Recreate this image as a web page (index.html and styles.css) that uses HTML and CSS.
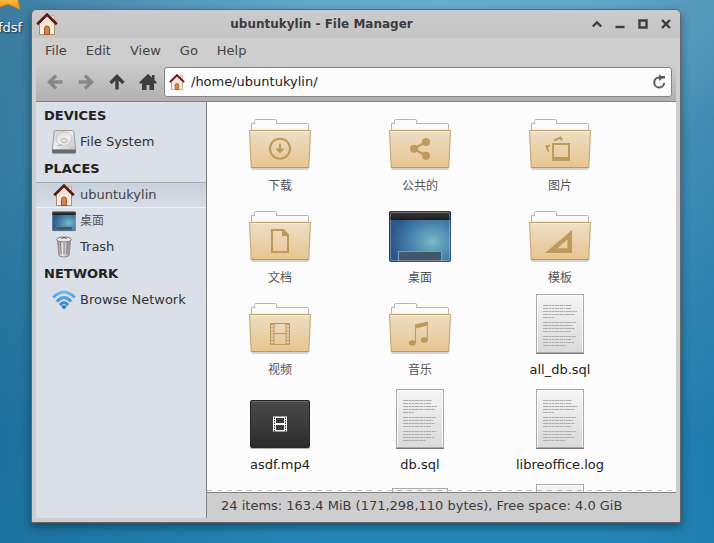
FILE: index.html
```html
<!DOCTYPE html>
<html lang="en">
<head>
<meta charset="utf-8">
<title>ubuntukylin - File Manager</title>
<link rel="stylesheet" href="styles.css">
</head>
<body>
<svg class="defs" aria-hidden="true">
  <defs>
    <linearGradient id="g-folder" x1="0" y1="0" x2="0" y2="1"><stop offset="0" stop-color="#eddfc6"/><stop offset="1" stop-color="#e7c48f"/></linearGradient>
    <linearGradient id="g-doc" x1="0" y1="0" x2="0" y2="1"><stop offset="0" stop-color="#f4f4f4"/><stop offset="1" stop-color="#dadada"/></linearGradient>
    <linearGradient id="g-bar" x1="0" y1="0" x2="0" y2="1"><stop offset="0" stop-color="#3c3c3c"/><stop offset="1" stop-color="#1c1c1c"/></linearGradient>
    <linearGradient id="g-video" x1="0" y1="0" x2="0" y2="1"><stop offset="0" stop-color="#4a4a4a"/><stop offset="1" stop-color="#2c2c2c"/></linearGradient>
    <radialGradient id="g-desk" cx="0.7" cy="0.6" r="0.68"><stop offset="0" stop-color="#79b9c8"/><stop offset="0.5" stop-color="#4a86ad"/><stop offset="1" stop-color="#2a5689"/></radialGradient>
    <linearGradient id="g-wall" x1="0" y1="0" x2="0" y2="1"><stop offset="0" stop-color="#f3d9c8"/><stop offset="1" stop-color="#fbf3ea"/></linearGradient>
    <linearGradient id="g-disk" x1="0" y1="0" x2="1" y2="1"><stop offset="0" stop-color="#d0d0d0"/><stop offset="0.5" stop-color="#f0f0f0"/><stop offset="1" stop-color="#c0c0c0"/></linearGradient>
    <linearGradient id="g-can" x1="0" y1="0" x2="1" y2="0"><stop offset="0" stop-color="#8c8c8c"/><stop offset="0.4" stop-color="#ededed"/><stop offset="1" stop-color="#858585"/></linearGradient>
    <linearGradient id="g-wifi" gradientUnits="userSpaceOnUse" x1="0" y1="2" x2="0" y2="20"><stop offset="0" stop-color="#74bff0"/><stop offset="1" stop-color="#2a78c4"/></linearGradient>
    <linearGradient id="g-star" x1="0" y1="0" x2="0" y2="1"><stop offset="0" stop-color="#ffc14a"/><stop offset="1" stop-color="#f59b1d"/></linearGradient>
  </defs>
  <symbol id="folder" viewBox="0 0 64 52">
    <path d="M3.500 51h57" stroke="#000" stroke-opacity=".16" stroke-width="2"/>
    <path d="M3.500 14V5.500H6.500V2.500q0-1 1-1H27.500q1 0 1 1V5.500H59.500q1 0 1 1V14" fill="#fcfcfc" stroke="#b4b4b4"/>
    <path d="M4 11.500H60" stroke="#ececec"/>
    <path d="M1.500 12.500H62.500L60.800 49.500H3.200Z" fill="url(#g-folder)" stroke="#c0a36a" stroke-linejoin="round"/>
    <path d="M2.500 13.500H61.500" stroke="#f6ecda"/>
    <path d="M3 49.500H61" stroke="#b99a62"/>
  </symbol>
  <symbol id="doc" viewBox="0 0 50 61">
    <path d="M1 60.500H49" stroke="#777"/>
    <rect x="1.500" y="1.500" width="47" height="58" fill="url(#g-doc)" stroke="#a9a9a9"/>
    <path d="M2.500 59V2.500H47.500V59" fill="none" stroke="#fafafa"/>
    <path d="M8 12.500H37M8 15.500H36M8 18.500H42M8 21.500H40M8 24.500H19M8 29.500H41M8 32.500H38M8 35.500H40M8 38.500H36M8 43.500H41M8 46.500H36M8 49.500H39M8 52.500H31" stroke="#adadad" stroke-dasharray="5 .5 3 .5 2 .5"/>
  </symbol>
  <symbol id="desktop" viewBox="0 0 64 52">
    <rect x="3" y="50" width="58" height="3" fill="#000" opacity=".2"/>
    <rect x="1" y="1" width="62" height="51" rx="2.500" fill="url(#g-desk)"/>
    <path d="M1 10V3.500Q1 1 3.500 1H60.500Q63 1 63 3.500V10Z" fill="url(#g-bar)"/>
    <rect x="10.500" y="41.500" width="43" height="10" fill="#42586a" stroke="#6fa0b8"/>
    <rect x="2.500" y="2.500" width="59" height="48" rx="1.500" fill="none" stroke="#fff" stroke-opacity=".28"/>
    <rect x="1.500" y="1.500" width="61" height="50" rx="2" fill="none" stroke="#173358" stroke-opacity=".6"/>
  </symbol>
  <symbol id="house" viewBox="0 0 22 22">
    <path d="M15.500 2.500h3v6h-3z" fill="#f3e2c8" stroke="#c9a97d"/>
    <path d="M3.500 10.500 11 3l7.500 7.500v11h-15z" fill="url(#g-wall)" stroke="#b28b6c"/>
    <path d="M8.500 21.500v-6q0-2.500 2.500-2.500t2.500 2.500v6z" fill="#d4834a" stroke="#9c5423"/>
    <path d="M1.200 11.200 11 1.600l9.800 9.600" fill="none" stroke="#5b1a1a" stroke-width="2.600"/>
  </symbol>
</svg>

<div class="desktop">
  <div class="shortcut">
    <svg class="star" viewBox="0 0 22 10" aria-hidden="true"><path d="M-8-4H19L21.500 9 10 4 0 7.500-8 10Z" fill="url(#g-star)" stroke="#d9861a"/></svg>
    <span>fdsf</span>
  </div>

  <main class="window">
    <header class="titlebar">
      <svg class="app-icon" aria-hidden="true"><use href="#house"/></svg>
      <h1>ubuntukylin - File Manager</h1>
      <button class="win-btn" aria-label="Shade"><svg viewBox="0 0 10 10"><path d="M.8 7.500 5 3.500 9.200 7.500"/></svg></button>
      <button class="win-btn" aria-label="Minimize"><svg viewBox="0 0 10 10"><path d="M.5 8h9"/></svg></button>
      <button class="win-btn" aria-label="Maximize"><svg viewBox="0 0 10 10"><path d="M1.500 1.500h7v7h-7z"/></svg></button>
      <button class="win-btn" aria-label="Close"><svg viewBox="0 0 10 10"><path d="M1 1l8 8M9 1 1 9"/></svg></button>
    </header>

    <nav class="menubar">
      <button>File</button><button>Edit</button><button>View</button><button>Go</button><button>Help</button>
    </nav>

    <div class="toolbar">
      <button class="tool" aria-label="Back" disabled><svg viewBox="0 0 16 16"><path d="M15.500 8H3M9 1.500 2.500 8 9 14.500" /></svg></button>
      <button class="tool" aria-label="Forward" disabled><svg viewBox="0 0 16 16"><path d="M.5 8h12.500M7 1.500 13.500 8 7 14.500"/></svg></button>
      <button class="tool" aria-label="Up"><svg viewBox="0 0 16 16"><path d="M8 15.500V3M1.500 9 8 2.500 14.500 9"/></svg></button>
      <button class="tool" aria-label="Home"><svg viewBox="0 0 16 16"><path class="solid" d="M8 0-.5 8v1.500H2V16h4.500v-5h3v5H14V9.500h2.500V8L14.500 6V1H12v2.500z"/></svg></button>
      <label class="path">
        <svg class="path-icon" aria-hidden="true"><use href="#house"/></svg>
        <input type="text" value="/home/ubuntukylin/" aria-label="Path">
        <button class="reload" aria-label="Reload"><svg viewBox="0 0 14 14"><path d="M8 2.500H7A5 5 0 1 0 12.200 8" /><path class="solid" d="M7 -.5 11.500 2.500 7 6zM9 1h4v2.500H9z"/></svg></button>
      </label>
    </div>

    <div class="body">
      <aside class="sidebar">
        <section>
          <h2>DEVICES</h2>
          <a href="#fs"><svg viewBox="0 0 24 24" aria-hidden="true"><path d="M1 18.500 22.500 18.500 24 19v3q0 1.500-1.500 1.500h-21Q0 23.500 0 22v-3z" fill="#6b6b6b"/><path d="M3.500.5h17q1 0 1.200 1L23.500 18v1.500H.5V18L2.300 1.500q.2-1 1.200-1z" fill="url(#g-disk)" stroke="#9a9a9a"/><ellipse cx="12" cy="9" rx="8" ry="7" fill="none" stroke="#c6c6c6"/><ellipse cx="12" cy="10.500" rx="3" ry="2" fill="#e8e8e8" stroke="#b4b4b4"/><path d="M5 16l5-1.500" stroke="#aaa"/></svg>File System</a>
        </section>
        <section>
          <h2>PLACES</h2>
          <a class="active" href="#home"><svg class="home" aria-hidden="true"><use href="#house"/></svg>ubuntukylin</a>
          <a class="cjk" href="#desk"><svg aria-hidden="true"><use href="#desktop"/></svg>桌面</a>
          <a href="#trash"><svg viewBox="0 0 24 24" aria-hidden="true"><path d="M5.500 5h13l-1.300 15q-.2 2-5.200 2t-5.200-2z" fill="url(#g-can)" stroke="#888"/><path d="M8.500 7l.7 12M12 7.500v12M15.500 7l-.7 12" stroke="#7f7f7f" fill="none"/><ellipse cx="12" cy="4.500" rx="7.500" ry="2.500" fill="#e2e2e2" stroke="#7c7c7c"/><path d="M9.500 3.500q2.500-2 5 0" fill="none" stroke="#555"/></svg>Trash</a>
        </section>
        <section>
          <h2>NETWORK</h2>
          <a href="#net"><svg viewBox="0 0 24 24" aria-hidden="true"><g fill="none" stroke="url(#g-wifi)" stroke-width="3"><path d="M1.200 9.500Q12-1.500 22.800 9.500"/><path d="M4.800 13.500Q12 5.500 19.200 13.500"/><path d="M8 17Q12 12 16 17"/></g><path d="M9.300 18.500Q12 16 14.700 18.500L12 21.500z" fill="#2a78c4"/></svg>Browse Network</a>
        </section>
      </aside>

      <section class="content">
        <div class="files">
          <a class="file cjk" href="#f1"><svg class="i-folder" viewBox="0 0 64 52"><use href="#folder"/><g class="emblem"><circle cx="32" cy="30.700" r="10" fill="none" stroke-width="2"/><path d="M32 25.500V31" stroke-width="2"/><path class="fill" d="M27.500 30.500h9L32 35.500z"/></g></svg><span>下载</span></a>
          <a class="file cjk" href="#f2"><svg class="i-folder" viewBox="0 0 64 52"><use href="#folder"/><g class="emblem"><path d="M38 24 25.500 30.800 38 37.700" fill="none" stroke-width="2.200"/><g class="fill"><circle cx="38" cy="24" r="4"/><circle cx="26" cy="30.800" r="4"/><circle cx="38" cy="37.700" r="4"/></g></g></svg><span>公共的</span></a>
          <a class="file cjk" href="#f3"><svg class="i-folder" viewBox="0 0 64 52"><use href="#folder"/><g class="emblem"><path d="M25 26h16v14H25z" fill="none" stroke-width="2"/><path d="M24 41.500h18" stroke-width="3"/><path d="M22 27.500l-3.500 1 2 5M26 22.500l6.500-3 1.500 3" fill="none" stroke-width="2"/></g></svg><span>图片</span></a>

          <a class="file cjk" href="#f4"><svg class="i-folder" viewBox="0 0 64 52"><use href="#folder"/><g class="emblem"><path d="M24 20h11.500L40 25v17H24z" fill="none" stroke-width="2"/><path class="fill" d="M34 19l7 7h-7z"/></g></svg><span>文档</span></a>
          <a class="file cjk" href="#f5"><svg class="i-folder"><use href="#desktop"/></svg><span>桌面</span></a>
          <a class="file cjk" href="#f6"><svg class="i-folder" viewBox="0 0 64 52"><use href="#folder"/><g class="emblem"><path class="fill" fill-rule="evenodd" d="M17 43 44 20V43zM29.500 38.300H39.500V29.500z"/></g></svg><span>模板</span></a>

          <a class="file cjk" href="#f7"><svg class="i-folder" viewBox="0 0 64 52"><use href="#folder"/><g class="emblem" fill="none"><path d="M22.500 21.500h19v21h-19zM26 21.500v21M38 21.500v21M26 31.500h12"/><path d="M24 22v21M40 22v21" stroke-width="3" stroke-dasharray="1 2.200"/></g></svg><span>视频</span></a>
          <a class="file cjk" href="#f8"><svg class="i-folder" viewBox="0 0 64 52"><use href="#folder"/><g class="emblem"><path d="M27.500 41V23.500M39.300 38V20.500" /><g class="fill"><path d="M27 22.500l12.800-3v4L27 26.800z"/><ellipse cx="24.300" cy="41" rx="3.500" ry="2.800"/><ellipse cx="36.300" cy="38" rx="3.500" ry="2.800"/></g></g></svg><span>音乐</span></a>
          <a class="file" href="#f9"><svg class="i-doc"><use href="#doc"/></svg><span>all_db.sql</span></a>

          <a class="file" href="#f10"><svg class="i-video" viewBox="0 0 62 50"><path d="M2 49.500h58" stroke="#000" stroke-opacity=".3"/><rect x="1" y="1" width="60" height="48" rx="2" fill="#262626"/><rect x="2" y="2" width="58" height="46" rx="1" fill="url(#g-video)"/><path d="M3 2.500h56" stroke="#686868"/><path d="M24 17.500h14v15H24z" fill="#fff"/><path d="M27 19h8v5h-8zM27 26h8v5h-8z" fill="#3a3a3a"/><path d="M25.500 18.500v14M36.500 18.500v14" stroke="#333" stroke-dasharray="1.500 1"/></svg><span>asdf.mp4</span></a>
          <a class="file" href="#f11"><svg class="i-doc"><use href="#doc"/></svg><span>db.sql</span></a>
          <a class="file" href="#f12"><svg class="i-doc"><use href="#doc"/></svg><span>libreoffice.log</span></a>

          <div class="file second"><svg class="i-wide" viewBox="0 0 58 56"><rect x="1.500" y=".5" width="55" height="54" fill="url(#g-doc)" stroke="#a9a9a9"/></svg></div>
          <div class="file"><svg class="i-doc"><use href="#doc"/></svg></div>
        </div>
        <footer class="status">24 items: 163.4 MiB (171,298,110 bytes), Free space: 4.0 GiB</footer>
      </section>
    </div>
  </main>
</div>
</body>
</html>
```
FILE: styles.css
```css
* { box-sizing: border-box; }

body {
  margin: 0;
  font: 13px/20px "DejaVu Sans", "Noto Sans CJK SC", sans-serif;
  color: #222;
}

button, input { font: inherit; color: inherit; border: 0; padding: 0; margin: 0; background: none; }
a { color: inherit; text-decoration: none; }
h1, h2 { margin: 0; }
svg { display: block; flex: none; overflow: visible; }
.defs { position: absolute; width: 0; height: 0; }

.desktop {
  position: relative;
  display: flex;
  height: 100vh;
  padding: 9px 33px 20px 31px;
  overflow: hidden;
  background:
    radial-gradient(ellipse 60% 30% at 62% 0%, rgba(112, 178, 210, .8), transparent),
    linear-gradient(90deg, rgba(16, 76, 112, .35), transparent 45%, transparent 85%, rgba(16, 90, 140, .2)),
    linear-gradient(#5597b7, #4795bb 30%, #2484b3 80%, #2387b8);
}

.shortcut {
  position: absolute;
  left: -2px;
  top: 0;
  color: #fff;
  text-shadow: 1px 1px 2px #123;
}
.star { width: 22px; height: 10px; margin-bottom: 8px; }

.window {
  flex: 1;
  min-width: 0;
  display: flex;
  flex-direction: column;
  background: #cecece;
  border: 1px solid #666;
  border-radius: 6px 6px 2px 2px;
  box-shadow: 0 4px 10px rgba(0, 20, 40, .45);
}

.titlebar {
  display: flex;
  align-items: center;
  height: 28px;
  padding: 0 3px 0 4px;
  background: linear-gradient(#cbcbcb, #c5c5c5);
  border-radius: 5px 5px 0 0;
}
.app-icon { width: 22px; height: 22px; }
h1 { flex: 1; text-align: center; font-size: 12px; color: #3c3c3c; }
.win-btn { display: grid; place-items: center; width: 23px; height: 24px; }
.win-btn svg { width: 10px; height: 10px; fill: none; stroke: #3c3c3c; stroke-width: 2.4; }

.menubar { display: flex; gap: 19px; height: 24px; padding: 2px 0 0 13px; color: #444; }

.toolbar {
  display: flex;
  align-items: center;
  height: 40px;
  margin: 0 4px;
  padding: 0 4px 0 3px;
  background: linear-gradient(#cecece, #b0b0b0);
  border-bottom: 1px solid #808080;
}
.tool { display: grid; place-items: center; width: 31px; height: 30px; }
.tool svg { width: 16px; height: 16px; fill: none; stroke: #3e3e3e; stroke-width: 3.4; }
.tool:disabled svg { stroke: #878787; }
.tool .solid { fill: #3e3e3e; stroke: none; }

.path {
  flex: 1;
  display: flex;
  align-items: center;
  height: 30px;
  margin-left: 1px;
  padding: 0 5px 0 4px;
  background: #fcfcfc;
  border: 1px solid #858585;
  border-radius: 3px;
}
.path-icon { width: 16px; height: 16px; margin-right: 6px; }
.path input { flex: 1; min-width: 0; outline: 0; }
.reload svg { width: 14px; height: 14px; fill: none; stroke: #5a5a5a; stroke-width: 2; }
.reload .solid { fill: #5a5a5a; stroke: none; }

.body { flex: 1; min-height: 0; display: flex; margin: 0 4px 4px; }

.sidebar {
  display: flex;
  flex-direction: column;
  gap: 1px;
  width: 171px;
  padding-top: 1px;
  background: #dadfe8;
  border-right: 1px solid #808080;
}
.sidebar h2 { padding-left: 8px; font-size: 13px; line-height: 26px; }
.sidebar a {
  display: flex;
  align-items: center;
  gap: 4px;
  height: 26px;
  padding-left: 16px;
  color: #333;
}
.sidebar svg { width: 24px; height: 24px; }
.sidebar .home { width: 22px; height: 22px; margin: 0 1px; }
.sidebar .active {
  color: #444;
  background: linear-gradient(#c8d1dc, #d6dde6);
  border-top: 1px solid #a5adb5;
  border-bottom: 1px solid #eef0f2;
}
.sidebar .cjk { font-size: 12px; color: #555; }

.content { flex: 1; min-width: 0; display: flex; flex-direction: column; }
.files {
  position: relative;
  flex: 1;
  min-height: 0;
  overflow: hidden;
  display: grid;
  grid-template-columns: repeat(auto-fill, 140px);
  align-content: start;
  row-gap: 5px;
  padding: 7px 3px 0;
  background: #fcfcfc;
}
.files::after {
  content: "";
  position: absolute;
  left: 0;
  right: 4px;
  bottom: 1px;
  height: 1px;
  background: repeating-linear-gradient(90deg, #bbb 0 5px, transparent 5px 10px);
}
.file {
  display: grid;
  grid-template-rows: 61px auto;
  justify-items: center;
  align-items: end;
  row-gap: 6px;
}
.file span { padding-bottom: 3px; }
.file.cjk { font-size: 12px; color: #555; }
.file.cjk span { padding-bottom: 0; align-self: start; }
.second { grid-column: 2; }
.i-folder { width: 64px; height: 52px; }
.i-doc { width: 50px; height: 61px; }
.i-video { width: 62px; height: 50px; }
.i-wide { width: 58px; height: 56px; }
.emblem { stroke: #bd9a5b; }
.emblem .fill { fill: #bd9a5b; stroke: none; }

.status {
  padding: 3px 14px 2px;
  border-top: 1px solid #808080;
  background: #cecece;
  color: #3c3c3c;
  white-space: nowrap;
}
```
